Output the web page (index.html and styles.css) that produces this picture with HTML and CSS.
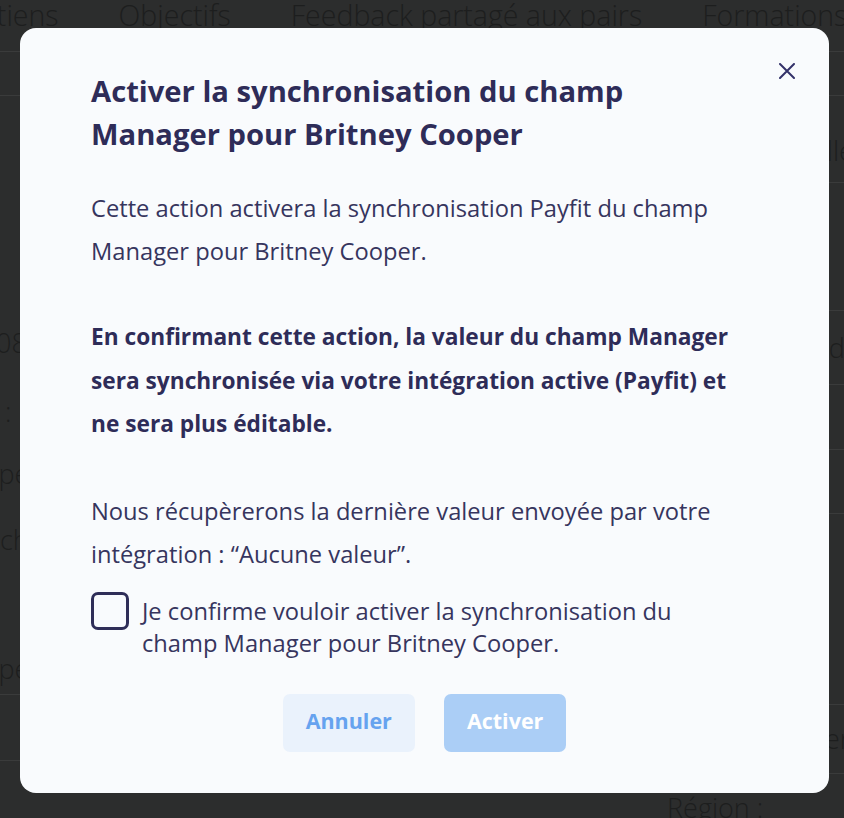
FILE: index.html
```html
<!DOCTYPE html>
<html lang="fr">
<head>
<meta charset="utf-8">
<title>Activer la synchronisation</title>
<link rel="stylesheet" href="styles.css">
</head>
<body>
<div class="page">
  <nav class="tabs">
    <span class="tab tab-first">Entretiens</span>
    <span class="tab">Objectifs</span>
    <span class="tab">Feedback partagé aux pairs</span>
    <span class="tab">Formations</span>
  </nav>
  <div class="subbar"></div>
  <div class="content">
    <div class="col col-left">
      <div class="cell l-spacer"></div>
      <div class="cell l-t1"><span class="l-08">08</span></div>
      <div class="cell l-t2"><span class="l-colon">Statut :</span></div>
      <div class="cell l-t3"><span class="l-type">Type</span></div>
      <div class="cell l-t4"><span class="l-rech">Recherche</span></div>
      <div class="cell l-t5 line"><span class="l-type">Type</span></div>
      <div class="cell l-t6 line"></div>
    </div>
    <div class="col col-right">
      <div class="cell r1 line"><span class="r-famille">Famille</span></div>
      <div class="cell r2 line"></div>
      <div class="cell r3 line"><span class="r-inde">Indépendant</span></div>
      <div class="cell r4 line"></div>
      <div class="cell r5 line"></div>
      <div class="cell r6 line"></div>
      <div class="cell r7 line"><span class="r-manager">Manager</span></div>
      <div class="cell r8"><span>Région :</span></div>
    </div>
  </div>
</div>

<div class="overlay">
  <div class="modal" role="dialog" aria-labelledby="modal-title">
    <button class="close" type="button" aria-label="Fermer">
      <svg width="16" height="16" viewBox="0 0 16 16" aria-hidden="true">
        <path d="M1 1 L15 15 M15 1 L1 15" stroke="currentColor" stroke-width="2" stroke-linecap="round" fill="none"/>
      </svg>
    </button>
    <h2 id="modal-title" class="title">Activer la synchronisation du champ Manager pour Britney Cooper</h2>
    <p class="text">Cette action activera la synchronisation Payfit du champ Manager pour Britney Cooper.</p>
    <p class="text text-strong">En confirmant cette action, la valeur du champ Manager sera synchronisée via votre intégration active (Payfit) et ne sera plus éditable.</p>
    <p class="text">Nous récupèrerons la dernière valeur envoyée par votre intégration : “Aucune valeur”.</p>
    <label class="confirm">
      <input class="confirm-input" type="checkbox">
      <span class="confirm-box"></span>
      <span class="confirm-label">Je confirme vouloir activer la synchronisation du champ Manager pour Britney Cooper.</span>
    </label>
    <div class="actions">
      <button class="btn btn-secondary" type="button">Annuler</button>
      <button class="btn btn-primary" type="button" disabled>Activer</button>
    </div>
  </div>
</div>
</body>
</html>
```

FILE: styles.css
```css
html, body {
  margin: 0;
  padding: 0;
}

body {
  background: #2c2d2d;
  font-family: "Open Sans", "Lato", sans-serif;
  overflow: hidden;
  width: 844px;
  height: 818px;
}

/* ---------- background page (dimmed) ---------- */
.page {
  color: #1d1e1e;
  font-family: "Open Sans", sans-serif;
  font-weight: 300;
  font-size: 27px;
  line-height: 30px;
}

.tabs {
  display: flex;
  gap: 60px;
  height: 52px;
  margin-left: -72px;
  border-bottom: 1px solid #3a3b3b;
  box-sizing: border-box;
  white-space: nowrap;
  font-size: 28.5px;
}

.subbar {
  height: 44px;
  border-bottom: 1px solid #3a3b3b;
  box-sizing: border-box;
}

.content {
  display: flex;
  justify-content: space-between;
}

.col {
  display: flex;
  flex-direction: column;
  white-space: nowrap;
}

.col-left {
  width: 200px;
}

.col-right {
  width: 177px;
  overflow: hidden;
}

.cell {
  display: flex;
  box-sizing: border-box;
  flex-shrink: 0;
}

.line {
  border-bottom: 1px solid #3a3b3b;
}

/* left column rows */
.l-spacer { height: 232px; }
.l-t1 { height: 30px; }
.l-t2 { height: 30px; margin-top: 39px; }
.l-t3 { height: 30px; margin-top: 32px; }
.l-t4 { height: 30px; margin-top: 36px; }
.l-t5 { height: 41px; margin-top: 99px; }
.l-t6 { height: 66px; }

.l-08 { margin-left: -4px; }
.l-colon { margin-left: -74px; }
.l-type { margin-left: -28px; }
.l-rech { margin-left: -31px; }

/* right column rows */
.r1 { height: 87px; align-items: flex-end; padding-bottom: 16px; }
.r2 { height: 128px; }
.r3 { height: 74px; align-items: center; }
.r4 { height: 65px; }
.r5 { height: 64px; }
.r6 { height: 191px; }
.r7 { height: 69px; align-items: center; }
.r8 { height: 44px; padding-top: 19px; }

.r-famille { margin-left: 102px; }
.r-inde { margin-left: 139px; }
.r-manager { margin-left: 76px; }

/* ---------- overlay & modal ---------- */
.overlay {
  position: fixed;
  inset: 0;
  padding: 28px 0 0 20px;
}

.modal {
  position: relative;
  box-sizing: border-box;
  width: 809px;
  height: 765px;
  background: #f9fbfd;
  border-radius: 16px;
  padding: 42px 88px 0 71px;
  color: #36355e;
}

.close {
  position: absolute;
  top: 35px;
  right: 34px;
  width: 16px;
  height: 16px;
  padding: 0;
  border: 0;
  background: none;
  color: #34326a;
  display: flex;
  cursor: pointer;
}

.title {
  margin: 0;
  max-width: 600px;
  font-size: 29.2px;
  line-height: 43px;
  font-weight: 700;
  color: #2e2c58;
}

.text {
  margin: 31px 0 0;
  font-size: 23.7px;
  line-height: 43px;
  font-weight: 400;
}

.text-strong {
  margin-top: 42px;
  font-size: 22.7px;
  font-weight: 700;
  line-height: 43.5px;
  color: #2e2c58;
}

.text-strong + .text {
  margin-top: 44px;
}

.confirm {
  display: flex;
  align-items: flex-start;
  gap: 13px;
  margin-top: 16px;
  cursor: pointer;
}

.confirm-input {
  position: absolute;
  opacity: 0;
  width: 0;
  height: 0;
}

.confirm-box {
  flex: 0 0 auto;
  box-sizing: border-box;
  width: 38px;
  height: 38px;
  border: 3px solid #2f2e58;
  border-radius: 7px;
  background: #f9fbfd;
}

.confirm-label {
  padding-top: 3px;
  font-size: 23.7px;
  line-height: 32px;
  max-width: 575px;
}

.actions {
  display: flex;
  justify-content: center;
  gap: 29px;
  margin: 35px -17px 0 0;
}

.btn {
  height: 58px;
  padding: 0 23px 5px;
  border: 0;
  border-radius: 7px;
  font-family: "Open Sans", sans-serif;
  font-size: 21.5px;
  font-weight: 700;
}

.btn-secondary {
  background: #eaf2fc;
  color: #66a3ef;
}

.btn-primary {
  background: #abcef6;
  color: #ffffff;
}
```
